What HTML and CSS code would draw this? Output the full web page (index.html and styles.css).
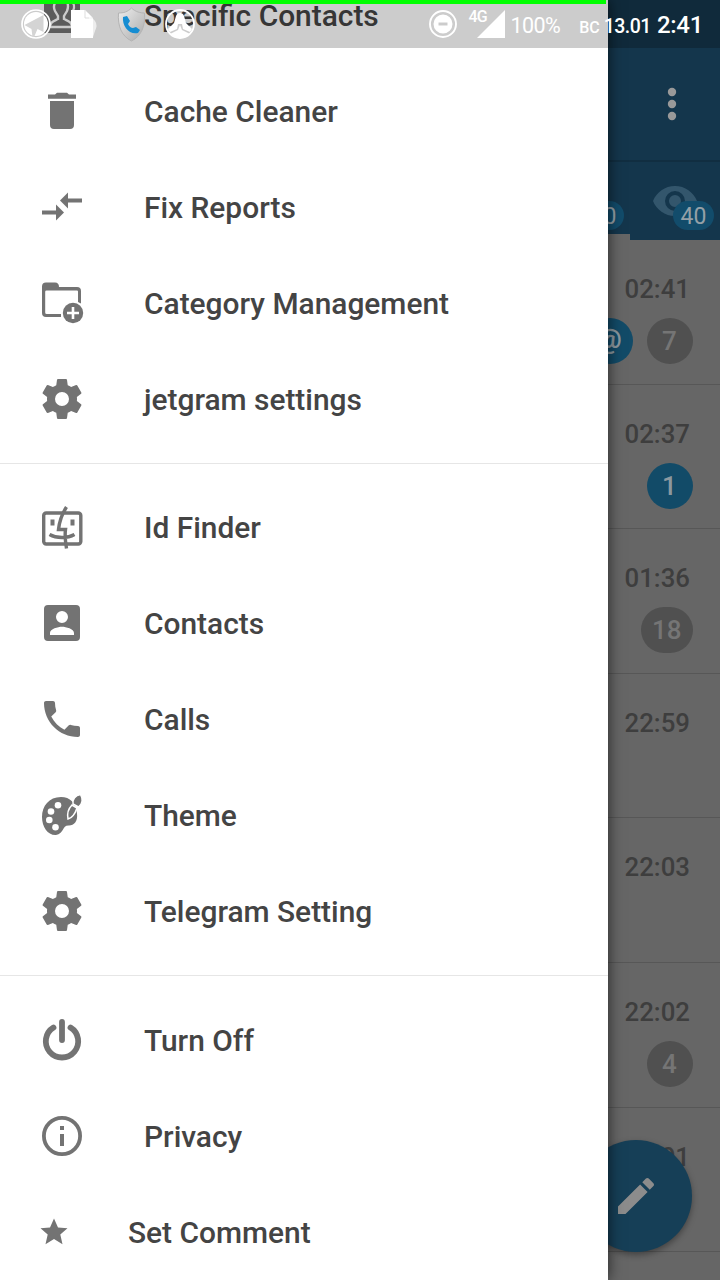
FILE: index.html
```
<!DOCTYPE html>
<html lang="en">
<head>
<meta charset="utf-8">
<title>jetgram</title>
<link rel="stylesheet" href="styles.css">
</head>
<body>
<svg class="defs" aria-hidden="true">
  <symbol id="gear" viewBox="0 0 24 24"><path d="M19.43 12.98c.04-.32.07-.64.07-.98s-.03-.66-.07-.98l2.11-1.65c.19-.15.24-.42.12-.64l-2-3.46c-.12-.22-.39-.3-.61-.22l-2.49 1c-.52-.4-1.08-.73-1.69-.98l-.38-2.65C14.460 2.18 14.250 2 14 2h-4c-.25 0-.46.18-.49.42l-.38 2.650c-.61.25-1.170.59-1.690.98l-2.490-1c-.23-.09-.49 0-.61.22l-2 3.460c-.13.22-.07.49.12.64l2.110 1.650c-.04.32-.07.65-.07.98s.03.66.07.98l-2.110 1.650c-.19.15-.24.42-.12.64l2 3.460c.12.22.39.3.61.22l2.490-1c.52.4 1.080.73 1.690.98l.38 2.650c.03.24.24.42.49.42h4c.25 0 .46-.18.49-.42l.38-2.650c.61-.25 1.170-.59 1.690-.98l2.490 1c.23.09.49 0 .61-.22l2-3.460c.12-.22.07-.49-.12-.64zM12 15.500A3.500 3.500 0 1 1 12 8.500A3.500 3.500 0 0 1 12 15.500z"/></symbol>
</svg>
<div class="screen">
  <main class="app">
    <div class="status-back"></div>
    <header class="toolbar"><svg class="more" viewBox="0 0 10 34"><circle cx="5" cy="5" r="4.200"/><circle cx="5" cy="17" r="4.200"/><circle cx="5" cy="29" r="4.200"/></svg></header>
    <nav class="tabs">
      <span class="tab-count first">30</span>
      <svg class="eye" viewBox="0 0 24 24"><path d="M12 4.500C7 4.500 2.730 7.610 1 12c1.730 4.390 6 7.500 11 7.500s9.270-3.110 11-7.500c-1.730-4.390-6-7.500-11-7.500zM12 17a5 5 0 1 1 0-10 5 5 0 0 1 0 10zm0-8a3 3 0 1 0 0 6 3 3 0 0 0 0-6z"/></svg>
      <span class="tab-count">40</span>
      <i class="tab-line"></i>
    </nav>
    <section class="chats">
      <article class="chat"><time>02:41</time><div class="badges"><b class="badge blue at">@</b><b class="badge">7</b></div></article>
      <article class="chat"><time>02:37</time><div class="badges"><b class="badge blue">1</b></div></article>
      <article class="chat"><time>01:36</time><div class="badges"><b class="badge">18</b></div></article>
      <article class="chat"><time>22:59</time></article>
      <article class="chat"><time>22:03</time></article>
      <article class="chat"><time>22:02</time><div class="badges"><b class="badge">4</b></div></article>
      <article class="chat"><time>22:01</time></article>
      <article class="chat"></article>
    </section>
    <div class="fab"><svg viewBox="0 0 24 24"><path d="M3 17.250V21h3.750L17.810 9.940l-3.750-3.750L3 17.250zM20.710 7.040c.39-.39.39-1.020 0-1.410l-2.340-2.340c-.39-.39-1.020-.39-1.410 0l-1.830 1.830 3.750 3.750 1.830-1.830z"/></svg></div>
  </main>
  <aside class="drawer">
    <ul class="menu">
      <li><svg viewBox="0 0 48 48"><path d="M6 5h36v37H6z"/><path class="person" d="M20 9c-4 2-5 7-3 11l3 5v3c-4 2-8 3-8 8h22c0-5-4-6-8-8v-3l3-5c2-5 1-11-4-12-2 0-3 0-5 1z"/><path class="person" d="M33 10c3 2 4 6 2 10v3l6 4"/></svg><span>Specific Contacts</span></li>
      <li><svg viewBox="0 0 48 48"><path d="M12 14h24v24q0 4-4 4H16q-4 0-4-4zM10 7.500h7l2-1.700h10l2 1.700h7v4.200H10z"/></svg><span>Cache Cleaner</span></li>
      <li><svg viewBox="0 0 48 48"><path d="M4 27.500h14v-6l8 8-8 8v-6H4zM44 15.500H30v-6l-8 8 8 8v-6h14z"/></svg><span>Fix Reports</span></li>
      <li><svg viewBox="0 0 48 48"><path d="M4 9V7.500q0-4 4-4h9q4 0 4 4.500H39q4 0 4 4v12.500l-3-1.500V12.500q0-1-1-1H8.500q-1.300 0-1.300 1.300V33.500q0 1.500 1.500 1.500H23v3H8q-4 0-4-4z"/><circle cx="35" cy="34" r="10.200"/><path class="cut" d="M35 28v12M29 34h12"/></svg><span>Category Management</span></li>
      <li><svg><use href="#gear"/></svg><span>jetgram settings</span></li>
    </ul>
    <ul class="menu">
      <li><svg viewBox="0 0 48 48"><g class="line thin"><rect x="5.700" y="10" width="37.100" height="31" rx="2.500"/><path d="M28.500 4c-4 6-7 14-8 22.500h7c-1 7 0 13 1 19M11.500 31.500c7 4 18 4 25 0"/></g><path d="M12.500 16.500h4v6h-4zM32.500 16.500h4v6h-4z"/></svg><span>Id Finder</span></li>
      <li><svg viewBox="0 0 48 48"><path fill-rule="evenodd" d="M10 6h28q4 0 4 4v28q0 4-4 4H10q-4 0-4-4V10q0-4 4-4zM24 12a6 6 0 1 0 0 12 6 6 0 0 0 0-12zM12 36h24v-2c0-4-8-6.200-12-6.200S12 30 12 34z"/></svg><span>Contacts</span></li>
      <li><svg viewBox="0 0 24 24"><path d="M6.620 10.790c1.440 2.830 3.760 5.140 6.590 6.590l2.200-2.200c.27-.27.67-.36 1.020-.24 1.120.37 2.330.57 3.570.57.55 0 1 .45 1 1V20c0 .55-.45 1-1 1C10.610 21 3 13.390 3 4c0-.55.45-1 1-1h3.500c.55 0 1 .45 1 1 0 1.250.2 2.450.57 3.570.11.35.03.74-.25 1.020z"/></svg><span>Calls</span></li>
      <li><svg viewBox="0 0 48 48"><path d="M23 6C11 6 4 15 4 26c0 10 6 18.500 14 18 8-1 6-10 13-9.500 5 0 9-4 8-12C38 12 32 6 23 6z"/><g class="holes"><circle cx="20" cy="14.200" r="3.300"/><circle cx="13" cy="20.500" r="3.300"/><circle cx="11.300" cy="29" r="3.300"/><circle cx="17.500" cy="36.300" r="3.300"/></g><path class="brush" d="M34 14c-4 4-5 9-4 14 4-1 7-5 9-11z"/><path class="brush" d="M42.500 3.500c-5 1-8 4.500-7.500 9.500l5.500 3c4-3 4.500-8 2-12.500z"/></svg><span>Theme</span></li>
      <li><svg><use href="#gear"/></svg><span>Telegram Setting</span></li>
    </ul>
    <ul class="menu last">
      <li><svg viewBox="0 0 48 48"><g class="power"><path d="M15.500 11.500a16.200 16.200 0 1 0 17 0M24 6v18"/></g></svg><span>Turn Off</span></li>
      <li><svg viewBox="0 0 48 48"><circle class="line" cx="24" cy="24" r="18.100"/><path d="M22 14h4v4h-4zM22 22h4v12h-4z"/></svg><span>Privacy</span></li>
      <li class="small"><svg viewBox="0 0 32 32"><path d="M16 2.500l4 9 9.500.7-7.200 6.300 2.200 9.700L16 23l-8.500 5.200 2.200-9.700L2.500 12.200l9.500-.7z"/></svg><span>Set Comment</span></li>
    </ul>
  </aside>
  <div class="statusbar">
    <i class="progress"></i>
    <svg class="notices" viewBox="0 0 210 48">
      <defs><linearGradient id="shield" x2="1" y2="1"><stop stop-color="#eee"/><stop offset="1" stop-color="#aaa"/></linearGradient></defs>
      <circle cx="36" cy="24" r="14" fill="none" stroke="#fff" stroke-width="1.700"/><circle cx="36" cy="24" r="12" fill="#fff"/><path d="M24.500 25l19-10v17l-6-3-3 7-2 1-1-8z" fill="#d4d4d4"/>
      <path d="M71 10h14l8 8v20H71z" fill="#fff"/><path d="M85 10v8h8" fill="none" stroke="#ddd"/><path d="M88 13l7 8q3 4 0 10l-2 6z" fill="#fff" opacity=".65"/>
      <path d="M131.500 8c4 4 9 5 13 5 1 13-3 23-13 28-10-5-14-15-13-28 5 0 9-1 13-5z" fill="url(#shield)" stroke="#b4b4b4"/><path d="M123 17l4-1 3 5-2 3q2 4 5 4l3-1 4 3-2 3c-9 2-16-7-15-16z" fill="#168dd2"/>
      <circle cx="180" cy="24" r="14" fill="none" stroke="#fff" stroke-width="1.800"/><path d="M180 13q3 0 4 3l2 7 6 6-2 3-7-3-1-5h-4l-1 5-7 3-2-3 6-6 2-7q1-3 4-3z" fill="#fff"/><path d="M170 34l8-4 2-5 2 5 8 4-4 3h-12z" fill="#fff"/>
    </svg>
    <div class="indicators">
      <svg class="dnd" viewBox="0 0 30 30"><circle cx="15" cy="15" r="13" fill="none" stroke="#fff" stroke-width="1.900"/><path fill-rule="evenodd" fill="#fff" d="M15 5.500a9.500 9.500 0 1 0 0 19 9.500 9.500 0 0 0 0-19zM10.500 13.500h9v3h-9z"/></svg>
      <div class="network"><span>4G</span><svg viewBox="0 0 28 28"><path d="M28 0v28H0z" fill="#fff"/></svg></div>
      <span class="battery">100%</span>
      <span class="day">ВС</span><span class="date">13.01</span><span class="clock">2:41</span>
    </div>
  </div>
</div>
</body>
</html>
```
FILE: styles.css
```
* { box-sizing: border-box; }
body { margin: 0; font-family: Roboto, "Liberation Sans", sans-serif; }
.defs { position: absolute; width: 0; height: 0; }
.screen { position: relative; width: 720px; height: 1280px; overflow: hidden; background: #666; }
.app { position: absolute; inset: 0; display: flex; flex-direction: column; }
.status-back { height: 48px; background: #14354a; flex: none; }
.toolbar { height: 112px; flex: none; background: #14364c; display: flex; justify-content: flex-end; padding: 39px 43px 0; }
.more { width: 10px; height: 34px; fill: #999; }
.tabs { height: 80px; flex: none; position: relative; background: #14364c; border-top: 2px solid #112e41; }
.eye { position: absolute; left: 651px; top: 15px; width: 48px; height: 48px; fill: #33566c; }
.tab-count { position: absolute; right: 6px; top: 39px; height: 29px; width: 41px; border-radius: 15px; background: #124c6b; color: #94a0a7; font-size: 23px; line-height: 31px; text-align: center; }
.tab-count.first { right: 96px; }
.tab-line { position: absolute; left: 540px; width: 90px; bottom: 0; height: 6px; background: #666; }
.chats { display: flex; flex-direction: column; }
.chat { height: 144.600px; flex: none; border-bottom: 1px solid #575757; padding: 33px 27.500px 0 0; display: flex; flex-direction: column; align-items: flex-end; gap: 13px; }
.chat time { font-weight: 500; font-size: 25.800px; line-height: 32px; color: #3e3e3e; margin-right: 2.500px; }
.badges { display: flex; gap: 14px; }
.badge { min-width: 46px; height: 46px; border-radius: 23px; padding: 0 11px; background: #505050; color: #757575; font-size: 26px; font-weight: 500; line-height: 46px; text-align: center; }
.badge.blue { background: #124b68; color: #8b989f; }
.badge.at { padding: 0 9px; font-size: 27px; font-weight: 700; line-height: 42px; }
.fab { position: absolute; left: 580px; top: 1140px; width: 112px; height: 112px; border-radius: 50%; background: #163f57; box-shadow: 0 3px 6px rgba(0,0,0,.35); display: grid; place-items: center; }
.fab svg { width: 48px; height: 48px; fill: #8c8c8c; }
.drawer { position: absolute; left: 0; top: 0; width: 608px; height: 1280px; overflow: hidden; background: #fff; display: flex; flex-direction: column; box-shadow: 0 0 14px rgba(0,0,0,.65); }
.menu { list-style: none; margin: 0; padding: 0; flex: none; }
.menu:first-child { margin-top: -32px; }
.menu + .menu { margin-top: 15px; border-top: 1px solid #e6e6e6; padding-top: 16px; }
.menu.last { padding-top: 17px; }
.menu li { height: 96px; display: flex; align-items: center; gap: 58px; padding-left: 38px; font-size: 29.900px; font-weight: 500; color: #444; line-height: 36px; }
.menu li svg { width: 48px; height: 48px; fill: #737373; flex: none; margin-bottom: 2px; }
.menu li.small svg { width: 32px; height: 32px; }
.menu .person { fill: none; stroke: #fff; stroke-width: 2.400; }
.cut { fill: none; stroke: #fff; stroke-width: 2.600; }
.line { fill: none; stroke: #737373; stroke-width: 3.800; }
.line.thin { stroke-width: 3.400; }
.holes { fill: #fff; }
.brush { stroke: #fff; stroke-width: 1.500; }
.power { fill: none; stroke: #737373; stroke-width: 5.800; stroke-linecap: round; }
.statusbar { position: absolute; inset: 0 0 auto; height: 48px; background: rgba(0,0,0,.2); color: #fff; display: flex; justify-content: space-between; }
.progress { position: absolute; left: 0; top: 0; width: 606px; height: 4px; background: #0f0; }
.notices { width: 210px; height: 48px; }
.indicators { display: flex; height: 48px; padding-right: 17px; align-items: baseline; line-height: 50px; }
.dnd { width: 30px; height: 30px; align-self: center; margin-right: 12px; }
.network { align-self: flex-start; display: flex; position: relative; padding: 10px 0 0 7px; width: 35px; }
.network svg { width: 28px; height: 28px; }
.network span { position: absolute; left: -1px; top: 9px; font-size: 16px; font-weight: 500; line-height: 16px; letter-spacing: -1px; }
.battery { font-size: 21.500px; letter-spacing: -.6px; margin: 0 19px 0 6px; }
.day { font-size: 16px; font-weight: 500; margin-right: 4px; }
.date { font-size: 19.500px; font-weight: 500; letter-spacing: -.5px; margin-right: 6px; }
.clock { font-size: 24px; font-weight: 500; letter-spacing: -.3px; }
```
